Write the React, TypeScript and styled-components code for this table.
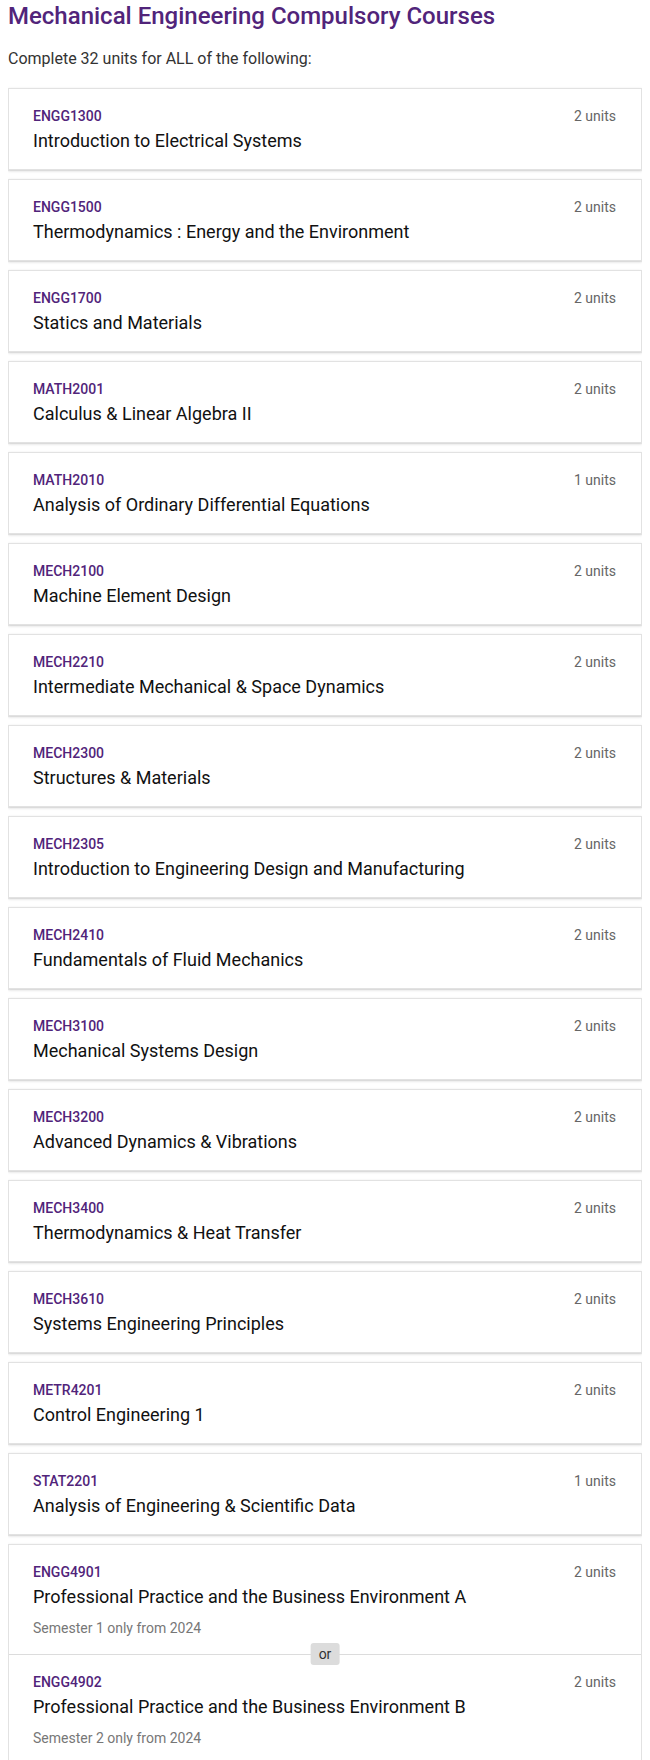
import React from "react";
import {createGlobalStyle, styled} from "styled-components";

const GlobalStyle = createGlobalStyle`
  body {
    margin: 0 8px;
    background: #ffffff;
    font-family: Roboto, "Liberation Sans", Arial, sans-serif;
    color: #333333;
  }
`;

const Page = styled.div`
  padding-top: 2px;
`;

const Heading = styled.h2`
  margin: 0;
  font-size: 24px;
  line-height: 28px;
  font-weight: 500;
  color: #51247a;
`;

const Intro = styled.p`
  margin: 19px 0 19px;
  font-size: 16px;
  line-height: 20px;
  color: #333333;
`;

const List = styled.div`
  display: flex;
  flex-direction: column;
  gap: 9px;
`;

const Card = styled.div`
  background: #ffffff;
  border: 1px solid #e2e2e2;
  box-shadow: 0 1px 3px rgba(0, 0, 0, 0.14), 0 1px 1px rgba(0, 0, 0, 0.06);
`;

const Entry = styled.div`
  padding: 17px 25px 16px 24px;
`;

const TopLine = styled.div`
  display: flex;
  justify-content: space-between;
  align-items: center;
  height: 20px;
`;

const Code = styled.span`
  font-size: 14px;
  font-weight: 500;
  color: #51247a;
`;

const Units = styled.span`
  font-size: 14px;
  color: #666666;
`;

const Title = styled.div`
  margin-top: 3px;
  font-size: 18px;
  line-height: 24px;
  font-weight: 400;
  color: #111111;
`;

const Note = styled.div`
  margin-top: 9px;
  font-size: 14px;
  line-height: 20px;
  color: #777777;
`;

const Divider = styled.div`
  position: relative;
  height: 1px;
  background: #dcdcdc;
`;

const OrBadge = styled.span`
  position: absolute;
  left: 50%;
  top: -11px;
  transform: translateX(-50%);
  height: 22px;
  padding: 0 8px;
  line-height: 22px;
  font-size: 14px;
  color: #333333;
  background: #dcdcdc;
  border-radius: 3px;
`;

type Course = { code: string; name: string; units: number; note?: string };

const courses: Course[] = [
    {code: "ENGG1300", name: "Introduction to Electrical Systems", units: 2},
    {code: "ENGG1500", name: "Thermodynamics : Energy and the Environment", units: 2},
    {code: "ENGG1700", name: "Statics and Materials", units: 2},
    {code: "MATH2001", name: "Calculus & Linear Algebra II", units: 2},
    {code: "MATH2010", name: "Analysis of Ordinary Differential Equations", units: 1},
    {code: "MECH2100", name: "Machine Element Design", units: 2},
    {code: "MECH2210", name: "Intermediate Mechanical & Space Dynamics", units: 2},
    {code: "MECH2300", name: "Structures & Materials", units: 2},
    {code: "MECH2305", name: "Introduction to Engineering Design and Manufacturing", units: 2},
    {code: "MECH2410", name: "Fundamentals of Fluid Mechanics", units: 2},
    {code: "MECH3100", name: "Mechanical Systems Design", units: 2},
    {code: "MECH3200", name: "Advanced Dynamics & Vibrations", units: 2},
    {code: "MECH3400", name: "Thermodynamics & Heat Transfer", units: 2},
    {code: "MECH3610", name: "Systems Engineering Principles", units: 2},
    {code: "METR4201", name: "Control Engineering 1", units: 2},
    {code: "STAT2201", name: "Analysis of Engineering & Scientific Data", units: 1},
];

const choice: Course[] = [
    {code: "ENGG4901", name: "Professional Practice and the Business Environment A", units: 2, note: "Semester 1 only from 2024"},
    {code: "ENGG4902", name: "Professional Practice and the Business Environment B", units: 2, note: "Semester 2 only from 2024"},
];

function CourseEntry({course}: { course: Course }) {
    return (
        <Entry>
            <TopLine>
                <Code>{course.code}</Code>
                <Units>{course.units} units</Units>
            </TopLine>
            <Title>{course.name}</Title>
            {course.note && <Note>{course.note}</Note>}
        </Entry>
    );
}

export default function App() {
    return (
        <Page>
            <GlobalStyle/>
            <Heading>Mechanical Engineering Compulsory Courses</Heading>
            <Intro>Complete 32 units for ALL of the following:</Intro>
            <List>
                {courses.map(c => (
                    <Card key={c.code}>
                        <CourseEntry course={c}/>
                    </Card>
                ))}
                <Card>
                    {choice.map((c, i) => (
                        <React.Fragment key={c.code}>
                            {i > 0 && <Divider><OrBadge>or</OrBadge></Divider>}
                            <CourseEntry course={c}/>
                        </React.Fragment>
                    ))}
                </Card>
            </List>
        </Page>
    );
}
